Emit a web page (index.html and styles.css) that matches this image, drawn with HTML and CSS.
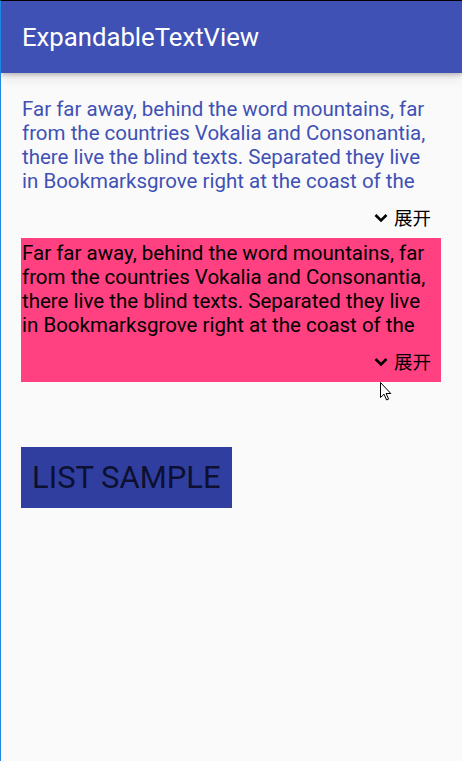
FILE: index.html
```html
<!DOCTYPE html>
<html>
<head>
<meta charset="utf-8">
<link rel="stylesheet" href="styles.css">
</head>
<body>
<div class="screen">
  <header class="toolbar">
    <h1 class="title">ExpandableTextView</h1>
  </header>
  <main class="content">
    <section class="etv etv-plain">
      <p class="etv-text">Far far away, behind the word mountains, far from the countries Vokalia and Consonantia, there live the blind texts. Separated they live in Bookmarksgrove right at the coast of the</p>
      <div class="etv-toggle">
        <svg class="chev" viewBox="0 0 14 10" width="14" height="10"><polyline points="1.5,2 7,7.5 12.5,2" fill="none" stroke="#000" stroke-width="2.6"/></svg>
        <span class="toggle-label">展开</span>
      </div>
    </section>
    <section class="etv etv-pink">
      <p class="etv-text">Far far away, behind the word mountains, far from the countries Vokalia and Consonantia, there live the blind texts. Separated they live in Bookmarksgrove right at the coast of the</p>
      <div class="etv-toggle">
        <svg class="chev" viewBox="0 0 14 10" width="14" height="10"><polyline points="1.5,2 7,7.5 12.5,2" fill="none" stroke="#000" stroke-width="2.6"/></svg>
        <span class="toggle-label">展开</span>
      </div>
      <svg class="cursor" viewBox="0 0 12 19" width="12" height="19"><path d="M0.5 0.5 L0.5 15.5 L4 12.2 L6.6 18 L8.6 17.1 L6.1 11.5 L10.8 11.5 Z" fill="#fff" stroke="#000" stroke-width="1"/></svg>
    </section>
    <button class="list-btn">LIST SAMPLE</button>
  </main>
</div>
</body>
</html>
```

FILE: styles.css
```css
html, body {
  margin: 0;
  padding: 0;
}
body {
  background: #fafafa;
  font-family: Roboto, "Noto Sans CJK SC", sans-serif;
}
.screen {
  width: 461px;
  height: 760px;
  border-left: 1px solid #1e88e5;
  border-top: 1px solid #000;
  background: #fafafa;
  overflow: hidden;
}
.toolbar {
  height: 72px;
  background: #3f51b5;
  display: flex;
  align-items: center;
  padding-left: 21px;
  box-shadow: 0 2px 4px rgba(0,0,0,0.22), 0 6px 12px rgba(0,0,0,0.08);
  position: relative;
  z-index: 1;
}
.title {
  margin: 0;
  color: #fff;
  font-weight: 400;
  font-size: 25.7px;
  margin-top: -1px;
}
.content {
  padding: 24px 20px 0 20px;
  display: flex;
  flex-direction: column;
  align-items: flex-start;
}
.etv {
  width: 420px;
  box-sizing: border-box;
}
.etv-text {
  margin: 0;
  font-size: 20.5px;
  line-height: 24px;
  height: 96px;
  overflow: hidden;
  padding-left: 1px;
}
.etv-plain .etv-text {
  color: #3f51b5;
}
.etv-pink {
  background: #ff4081;
  position: relative;
  padding-top: 3px;
}
.etv-pink .etv-text {
  color: #000;
}
.etv-toggle {
  display: flex;
  justify-content: flex-end;
  align-items: center;
  height: 45px;
  box-sizing: border-box;
  padding-top: 3px;
  padding-right: 10px;
}
.chev {
  display: block;
  margin-right: 6px;
  margin-top: 1px;
}
.toggle-label {
  font-size: 18.5px;
  color: #000;
  font-family: "Noto Sans CJK SC", sans-serif;
}
.cursor {
  position: absolute;
  left: 359px;
  top: 144px;
}
.list-btn {
  margin-top: 65px;
  width: 211px;
  height: 61px;
  border: 0;
  background: #303f9f;
  color: #0d1030;
  font-family: Roboto, sans-serif;
  font-size: 31px;
  padding: 0 0 0 11px;
  text-align: left;
}
```
